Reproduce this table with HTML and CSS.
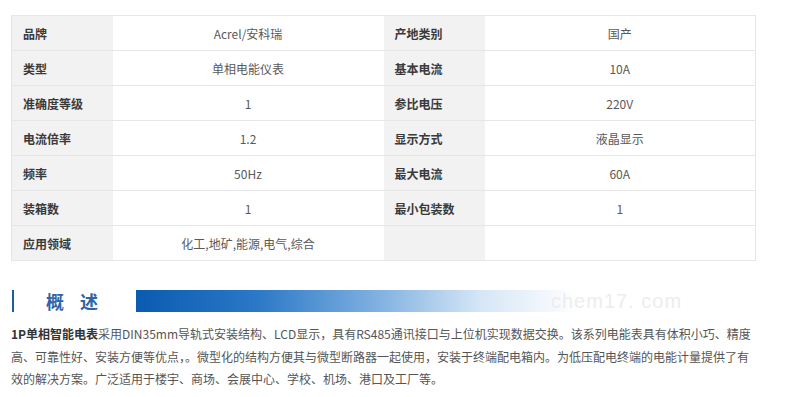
FILE: index.html
```html
<!DOCTYPE html>
<html lang="zh">
<head>
<meta charset="utf-8">
<title>产品参数</title>
<link rel="stylesheet" href="styles.css">
</head>
<body>
<div class="page">
  <table class="spec">
    <tr><th>品牌</th><td>Acrel/安科瑞</td><th>产地类别</th><td>国产</td></tr>
    <tr><th>类型</th><td>单相电能仪表</td><th>基本电流</th><td>10A</td></tr>
    <tr><th>准确度等级</th><td>1</td><th>参比电压</th><td>220V</td></tr>
    <tr><th>电流倍率</th><td>1.2</td><th>显示方式</th><td>液晶显示</td></tr>
    <tr><th>频率</th><td>50Hz</td><th>最大电流</th><td>60A</td></tr>
    <tr><th>装箱数</th><td>1</td><th>最小包装数</th><td>1</td></tr>
    <tr><th>应用领域</th><td>化工,地矿,能源,电气,综合</td><th></th><td></td></tr>
  </table>

  <div class="section-head">
    <span class="mark"></span>
    <h2 class="title">概&nbsp;述</h2>
    <span class="band"></span>
    <span class="watermark">chem17. com</span>
  </div>

  <p class="desc"><strong>1P单相智能电表</strong>采用DIN35mm导轨式安装结构、LCD显示，具有RS485通讯接口与上位机实现数据交换。该系列电能表具有体积小巧、精度高、可靠性好、安装方便等优点，。微型化的结构方便其与微型断路器一起使用，安装于终端配电箱内。为低压配电终端的电能计量提供了有效的解决方案。广泛适用于楼宇、商场、会展中心、学校、机场、港口及工厂等。</p>
</div>
</body>
</html>
```
FILE: styles.css
```css
html, body {
  margin: 0;
  padding: 0;
  background: #ffffff;
}
body {
  font-family: "Noto Sans CJK SC", "Liberation Sans", sans-serif;
  color: #555;
}
.page {
  padding: 15px 0 0 11px;
  width: 745px;
}
.spec {
  width: 745px;
  border-collapse: collapse;
  table-layout: fixed;
  font-size: 12px;
  border: 1px solid #e6e6e6;
}
.spec tr {
  height: 35px;
}
.spec th {
  width: 101px;
  background: #f2f2f2;
  color: #3a3a3a;
  font-weight: 600;
  text-align: left;
  padding: 0 0 0 11px;
  border-top: 1px solid #e6e6e6;
  box-sizing: border-box;
}
.spec td {
  background: #fff;
  color: #5a5a5a;
  text-align: center;
  padding: 0;
  border-top: 1px solid #e6e6e6;
}
.section-head {
  position: relative;
  display: flex;
  align-items: center;
  height: 22px;
  margin-top: 29px;
}
.mark {
  width: 2px;
  height: 22px;
  margin-left: 1px;
  background: #1f5c9f;
}
.title {
  margin: 0 0 0 32px;
  font-size: 18px;
  line-height: 22px;
  font-weight: 700;
  color: #2f65a6;
  letter-spacing: 6px;
  width: 90px;
  font-family: "Noto Sans CJK SC", sans-serif;
}
.band {
  width: 480px;
  height: 22px;
  background: linear-gradient(to right, #0a5bb1 0%, #2a78c6 25%, #7fb0e0 50%, #d6e7f6 72%, #ffffff 92%);
}
.watermark {
  position: absolute;
  left: 540px;
  top: -1px;
  font-family: "Liberation Sans", sans-serif;
  font-size: 20px;
  line-height: 24px;
  color: #ededed;
  letter-spacing: 1px;
}
.desc {
  margin: 11px 0 0;
  width: 740px;
  font-size: 12px;
  line-height: 22.5px;
  color: #555;
}
.desc strong {
  color: #333;
  font-weight: 700;
}
```
